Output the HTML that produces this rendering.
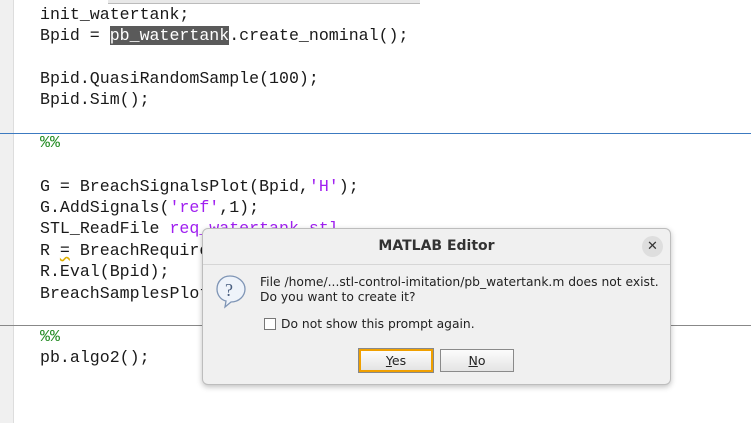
<!DOCTYPE html>
<html><head><style>
body{margin:0;width:751px;height:423px;overflow:hidden;background:#fff;position:relative;font-family:"Liberation Mono",monospace}
.g{position:absolute;left:0;top:0;width:13px;height:423px;background:#f0f0f0;border-right:1px solid #ddd}
.l{position:absolute;left:40px;font-size:16.6px;color:#1a1a1a;white-space:pre;line-height:20px;margin-top:1px}
.s{color:#a020f0}.c{color:#228b22}
.hl{background:#5a5a5a;color:#fff}
.sep{position:absolute;left:0;width:751px;height:1px}
.d{position:absolute;left:202px;top:228px;width:467px;height:155px;background:#f0f0f0;border:1px solid #bdbdbd;border-radius:6px;box-shadow:0 2px 6px rgba(0,0,0,.25);font-family:"DejaVu Sans","Liberation Sans",sans-serif;color:#222}
.t{position:absolute;top:0;left:0;right:0;height:35px;border-bottom:1px solid #d6d6d6;text-align:center;line-height:35px;font-weight:bold;font-size:14px;color:#333}
.x{position:absolute;right:7px;top:7px;width:21px;height:21px;border-radius:50%;background:#dedede;text-align:center;line-height:21px;font-size:13px;font-weight:normal}
.m{position:absolute;left:57px;font-size:12.3px}
.b{position:absolute;top:120px;height:21px;width:72px;background:linear-gradient(#fcfcfc,#e4e4e4);border:1px solid #8a8a8a;text-align:center;line-height:21px;font-size:12.5px}
</style></head><body>
<div class="g"></div>
<div style="position:absolute;left:108px;top:0;width:312px;height:3px;background:#e8e8e8;border-bottom:1px solid #bbb"></div>
<div class="l" style="top:4px">init_watertank;</div>
<div class="l" style="top:25px">Bpid = <span class="hl">pb_watertank</span>.create_nominal();</div>
<div class="l" style="top:68px">Bpid.QuasiRandomSample(100);</div>
<div class="l" style="top:89px">Bpid.Sim();</div>
<div class="sep" style="top:133px;background:#3c7ac0"></div>
<div class="l c" style="top:132px">%%</div>
<div class="l" style="top:176px">G = BreachSignalsPlot(Bpid,<span class="s">'H'</span>);</div>
<div class="l" style="top:197px">G.AddSignals(<span class="s">'ref'</span>,1);</div>
<div class="l" style="top:218px">STL_ReadFile <span class="s">req_watertank.stl</span></div>
<div class="l" style="top:240px">R <span style="text-decoration:underline wavy #e0b000">=</span> BreachRequirement</div>
<div class="l" style="top:261px">R.Eval(Bpid);</div>
<div class="l" style="top:283px">BreachSamplesPlot</div>
<div class="sep" style="top:325px;background:#888"></div>
<div class="l c" style="top:326px">%%</div>
<div class="l" style="top:347px">pb.algo2();</div>
<div class="d">
<div class="t">MATLAB Editor<div class="x">✕</div></div>
<svg style="position:absolute;left:12px;top:45px" width="32" height="36" viewBox="0 0 32 36"><path d="M15 2C7 2 2 8 2 15c0 6 4 11 9 12l-1 6 6-5c8 0 14-6 14-13S23 2 15 2z" fill="#eef3fa" stroke="#7f95b5" stroke-width="1.3"/><text x="10" y="22" font-size="18" font-family="Liberation Serif,serif" fill="#4a5f80">?</text></svg>
<div class="m" style="top:46px">File /home/...stl-control-imitation/pb_watertank.m does not exist.</div>
<div class="m" style="top:61px">Do you want to create it?</div>
<div style="position:absolute;left:61px;top:89px;width:10px;height:10px;border:1px solid #777;background:#fff"></div>
<div class="m" style="left:78px;top:88px">Do not show this prompt again.</div>
<div class="b" style="left:156px;border:2px solid #f0a000;outline:1px solid #888;height:19px;width:70px;line-height:19px"><u>Y</u>es</div>
<div class="b" style="left:237px"><u>N</u>o</div>
</div>
</body></html>
